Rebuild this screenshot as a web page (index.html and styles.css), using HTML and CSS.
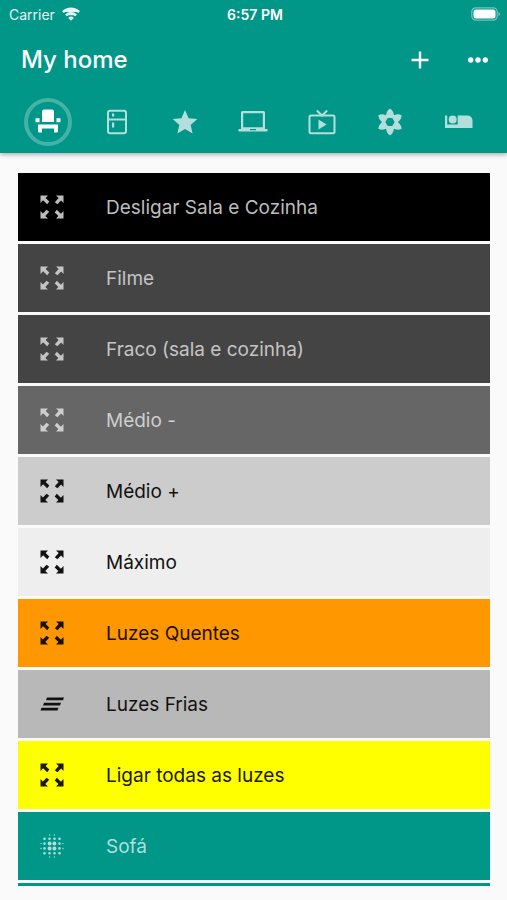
FILE: index.html
```
<!DOCTYPE html>
<html lang="pt">
<head>
<meta charset="utf-8">
<meta name="viewport" content="width=device-width, initial-scale=1">
<title>My home</title>
<link rel="stylesheet" href="styles.css">
</head>
<body>
<svg class="sprite" aria-hidden="true">
  <symbol id="expand" viewBox="0 0 24 24">
    <path id="arrow" d="M.5.5h7.500L5.600 2.900 9.300 6.600 7.200 9.200 3.100 5.300.5 8z"/>
    <use href="#arrow" transform="rotate(90 12 12)"/>
    <use href="#arrow" transform="rotate(180 12 12)"/>
    <use href="#arrow" transform="rotate(270 12 12)"/>
  </symbol>
</svg>
<header class="app-bar">
  <div class="status">
    <div class="carrier">
      <span>Carrier</span>
      <svg class="wifi" viewBox="0 0 18 14" fill="none" stroke="currentColor" stroke-width="2.400"><path d="M.9 5.100a11.500 11.500 0 0 1 16.200 0M3.900 8.300a7.200 7.200 0 0 1 10.200 0"/><path d="M9 13.800 6.100 10.900a4.100 4.100 0 0 1 5.800 0z" fill="currentColor" stroke="none"/></svg>
    </div>
    <time class="clock">6:57 PM</time>
    <svg class="battery" viewBox="0 0 30 14"><rect x=".8" y=".8" width="25.400" height="12.400" rx="4" fill="none" stroke="#fff" stroke-opacity=".45" stroke-width="1.200"/><rect x="2.500" y="2.500" width="22" height="9" rx="2.500" fill="#fff"/><path d="M27.500 5v4q1.500-.7 1.500-2t-1.500-2" fill="#fff" opacity=".5"/></svg>
  </div>
  <div class="title-row">
    <h1>My home</h1>
    <button class="action" type="button" aria-label="Add"><svg viewBox="0 0 26 26"><path d="M11.800 4.500h2.400v7.300h7.300v2.400h-7.300v7.300h-2.400v-7.300H4.500v-2.400h7.300z"/></svg></button>
    <button class="action" type="button" aria-label="More"><svg viewBox="0 0 26 26"><circle cx="5.700" cy="13" r="2.700"/><circle cx="13" cy="13" r="2.700"/><circle cx="20.300" cy="13" r="2.700"/></svg></button>
  </div>
  <nav class="tabs">
    <button class="tab tab-active" type="button" aria-label="Living room"><svg viewBox="0 0 28 28"><path d="M10 1.500h8q2 0 2 2V14H8V3.500q0-2 2-2zM1.500 10.200h4v4h-4zM22.500 10.200h4v4h-4zM4 16.500h20v8h-4v-4H8v4H4z"/></svg></button>
    <button class="tab" type="button" aria-label="Kitchen"><svg viewBox="0 0 28 28"><rect x="5" y="2.700" width="18" height="22.600" rx="2" fill="none" stroke="currentColor" stroke-width="2"/><path d="M5 10.500h18v2H5zM9 5.500h2.200v3H9zM9 14.500h2.200v5H9z"/></svg></button>
    <button class="tab" type="button" aria-label="Favorites"><svg viewBox="0 0 28 28"><path d="M14 2l3.600 8.200 8.700.8-6.600 5.900 1.900 8.600-7.600-4.500-7.600 4.500 1.900-8.600L1.700 11l8.700-.8z"/></svg></button>
    <button class="tab" type="button" aria-label="Office"><svg class="wide" viewBox="0 0 32 28"><path d="M5.500 3h21q1.500 0 1.500 1.500v16.500h2.500v2.500h-29V21H4V4.500Q4 3 5.500 3zM6.200 5.200v14h19.600v-14zM13 21v1.200h6V21z" fill-rule="evenodd"/></svg></button>
    <button class="tab" type="button" aria-label="TV"><svg class="wide" viewBox="0 0 32 28"><g fill="none" stroke="currentColor" stroke-width="2"><rect x="3.500" y="7.500" width="25" height="17.800" rx="1.500"/><path d="M10.800 2.500l5.200 5 5.200-5"/></g><path d="M12.500 11.500v10l8-5z"/></svg></button>
    <button class="tab" type="button" aria-label="Garden"><svg viewBox="0 0 28 28"><path id="petal" d="M14 .5c3.300 2.200 4.400 5.500 3.600 9.500h-7.200C9.600 6 10.700 2.700 14 .5z"/><use href="#petal" transform="rotate(60 14 14)"/><use href="#petal" transform="rotate(120 14 14)"/><use href="#petal" transform="rotate(180 14 14)"/><use href="#petal" transform="rotate(240 14 14)"/><use href="#petal" transform="rotate(300 14 14)"/><circle cx="14" cy="14" r="6.500" fill="none" stroke="currentColor" stroke-width="3"/></svg></button>
    <button class="tab" type="button" aria-label="Bedroom"><svg class="wide" viewBox="0 0 32 28"><path d="M2 7.500h2.200v9h10.500V7.500H24q5.500 0 5.500 5.500v7H2z"/><circle cx="9.700" cy="11.500" r="4"/></svg></button>
  </nav>
</header>
<main class="scenes">
  <button type="button" class="scene black"><svg class="icon"><use href="#expand"/></svg><span>Desligar Sala e Cozinha</span></button>
  <button type="button" class="scene charcoal"><svg class="icon"><use href="#expand"/></svg><span>Filme</span></button>
  <button type="button" class="scene charcoal"><svg class="icon"><use href="#expand"/></svg><span>Fraco (sala e cozinha)</span></button>
  <button type="button" class="scene gray"><svg class="icon"><use href="#expand"/></svg><span>Médio -</span></button>
  <button type="button" class="scene silver"><svg class="icon"><use href="#expand"/></svg><span>Médio +</span></button>
  <button type="button" class="scene white"><svg class="icon"><use href="#expand"/></svg><span>Máximo</span></button>
  <button type="button" class="scene orange"><svg class="icon"><use href="#expand"/></svg><span>Luzes Quentes</span></button>
  <button type="button" class="scene ash"><svg class="icon" viewBox="0 0 24 24"><path d="M7 5.500h17l-1 2.700H6zM4 10.700h17l-1 2.700H3zM1.500 15.800h17l-1 2.700h-17z"/></svg><span>Luzes Frias</span></button>
  <button type="button" class="scene yellow"><svg class="icon"><use href="#expand"/></svg><span>Ligar todas as luzes</span></button>
  <button type="button" class="scene teal"><svg class="icon" viewBox="0 0 24 24" fill="none" stroke="currentColor" stroke-linecap="round"><path stroke-width="1.400" d="M9.600 1h0M14.400 1h0M9.600 23h0M14.400 23h0M1 9.600h0M1 14.400h0M23 9.600h0M23 14.400h0"/><path stroke-width="2.600" d="M4.500 4.700h0M9.500 4.700h0M14.500 4.700h0M19.500 4.700h0M4.500 9.600h0M19.500 9.600h0M4.500 14.400h0M19.500 14.400h0M4.500 19.300h0M9.500 19.300h0M14.500 19.300h0M19.500 19.300h0"/><path stroke-width="4" d="M9.600 9.600h0M14.400 9.600h0M9.600 14.400h0M14.400 14.400h0"/></svg><span>Sofá</span></button>
  <div class="scene-peek"></div>
</main>
</body>
</html>
```
FILE: styles.css
```
* { box-sizing: border-box; }
body {
  margin: 0;
  background: #fafafa;
  font-family: Inter, "Liberation Sans", sans-serif;
}
button {
  border: 0;
  padding: 0;
  background: none;
  font: inherit;
  color: inherit;
}
svg { display: block; fill: currentColor; }
.sprite { display: none; }
.app-bar {
  background: #009688;
  color: #fff;
  padding-bottom: 1px;
  box-shadow: 0 1px 5px rgba(0, 0, 0, .4);
}
.status {
  display: grid;
  grid-template-columns: 1fr auto 1fr;
  align-items: center;
  height: 28px;
  padding: 0 6px 0 9px;
  font-size: 14px;
}
.carrier { display: flex; align-items: center; gap: 7px; opacity: .9; }
.wifi { width: 18px; height: 14px; }
.clock { font-weight: 600; }
.battery { width: 30px; height: 14px; justify-self: end; }
.title-row {
  display: flex;
  align-items: center;
  height: 64px;
  padding: 0 16px 0 21px;
  gap: 32px;
}
h1 {
  flex: 1;
  margin: 0;
  font-size: 24px;
  font-weight: 500;
  line-height: 32px;
}
.action svg { width: 26px; height: 26px; }
.tabs { display: flex; padding: 0 14px; height: 60px; }
.tab {
  flex: 1;
  display: flex;
  align-items: center;
  justify-content: center;
  color: #b2dfdb;
}
.tab svg { width: 28px; height: 28px; }
.tab svg.wide { width: 32px; }
.tab-active { color: #fff; }
.tab-active svg {
  box-sizing: content-box;
  padding: 6px;
  border: 4px solid rgba(255, 255, 255, .27);
  border-radius: 50%;
}
.scenes {
  display: flex;
  flex-direction: column;
  gap: 3px;
  padding: 20px 17px 14px 18px;
}
.scene {
  display: flex;
  align-items: center;
  gap: 42px;
  height: 68px;
  padding: 0 22px;
  font-size: 19px;
  text-align: left;
}
.icon { width: 24px; height: 24px; flex: none; }
.black { background: #000; color: #bdbdbd; }
.charcoal { background: #444; color: #c4c4c4; }
.gray { background: #666; color: #cecece; }
.silver { background: #ccc; color: #111; }
.white { background: #eee; color: #111; }
.orange { background: #ff9800; color: #1a1000; }
.ash { background: #b8b8b8; color: #111; }
.yellow { background: #ff0; color: #191900; }
.teal { background: #009688; color: #b2dfdb; }
.scene-peek { height: 3px; background: #009688; }
```
